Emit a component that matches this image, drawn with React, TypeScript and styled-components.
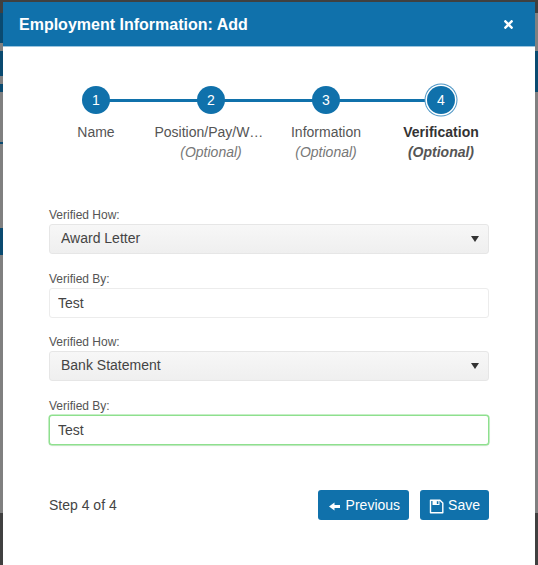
import React from 'react';
import styled, { createGlobalStyle } from 'styled-components';
import { FaTimes } from 'react-icons/fa';

const Global = createGlobalStyle`
  html, body {
    margin: 0;
    height: 100%;
    background: #808080;
    font-family: "Liberation Sans", Arial, sans-serif;
    overflow: hidden;
  }
`;

const BLUE = '#1071ab';

const Page = styled.div`
  position: relative;
  width: 538px;
  height: 565px;
  overflow: hidden;
  background: #808080;
`;

/* bits of the dimmed page showing around the dialog */
const Behind = styled.div<{ $top: number; $height: number; $color: string; $right?: boolean }>`
  position: absolute;
  top: ${p => p.$top}px;
  height: ${p => p.$height}px;
  width: 3px;
  background: ${p => p.$color};
  ${p => (p.$right ? 'right: 0;' : 'left: 0;')}
`;

const BottomShade = styled.div`
  position: absolute;
  left: 0;
  right: 0;
  top: 513px;
  bottom: 0;
  background: #404040;
`;

const TopShade = styled.div`
  position: absolute;
  left: 0;
  right: 0;
  top: 0;
  height: 13px;
  background: #404040;
`;

const Modal = styled.div`
  position: absolute;
  top: 2px;
  left: 3px;
  width: 532px;
  height: 563px;
  background: #fff;
  display: flex;
  flex-direction: column;
`;

const Header = styled.header`
  height: 45px;
  flex: none;
  box-sizing: border-box;
  background: ${BLUE};
  border-bottom: 1px solid #9cc5de;
  display: flex;
  align-items: center;
  justify-content: space-between;
  padding: 1px 20px 0 16px;
  color: #fff;
`;

const Title = styled.h4`
  margin: 0;
  font-size: 16px;
  font-weight: 700;
`;

const CloseIcon = styled(FaTimes)`
  width: 13px;
  height: 13px;
`;

const Stepper = styled.ol`
  position: relative;
  display: flex;
  list-style: none;
  margin: 39px 0 0 35.5px;
  padding: 0;
  width: 460px;

  &::before {
    content: '';
    position: absolute;
    top: 12.5px;
    left: 57px;
    width: 345px;
    height: 3px;
    background: ${BLUE};
  }
`;

const Step = styled.li`
  position: relative;
  width: 115px;
  display: flex;
  flex-direction: column;
  align-items: center;
  text-align: center;
`;

const Circle = styled.span<{ $active?: boolean }>`
  width: 28px;
  height: 28px;
  border-radius: 50%;
  background: ${BLUE};
  color: #fff;
  font-size: 14px;
  line-height: 28px;
  ${p => p.$active && `box-shadow: 0 0 0 1.5px #fff, 0 0 0 2.5px #4a94c4;`}
`;

const StepName = styled.span<{ $active?: boolean; $cut?: boolean }>`
  margin-top: 8px;
  max-width: 111px;
  font-size: 14px;
  line-height: 20px;
  color: ${p => (p.$active ? '#333' : '#555')};
  font-weight: ${p => (p.$active ? 700 : 400)};
  white-space: nowrap;
  overflow: hidden;
  text-overflow: ellipsis;
  ${p => p.$cut && 'margin-right: 2px;'}
`;

const StepNote = styled.em<{ $active?: boolean }>`
  font-size: 14px;
  line-height: 20px;
  color: ${p => (p.$active ? '#555' : '#777')};
  font-weight: ${p => (p.$active ? 700 : 400)};
`;

const Form = styled.form`
  margin: 47px 46px 0;
  display: flex;
  flex-direction: column;
  gap: 18.5px;
`;

const Field = styled.div`
  display: flex;
  flex-direction: column;
`;

const Label = styled.label`
  font-size: 12px;
  line-height: 12px;
  height: 15px;
  color: #555;
`;

const SelectWrap = styled.div`
  position: relative;
`;

const Select = styled.select`
  display: block;
  width: 100%;
  height: 30px;
  box-sizing: border-box;
  appearance: none;
  border: 1px solid #e6e6e6;
  border-radius: 3px;
  background: linear-gradient(#f7f7f7, #efefef);
  padding: 0 11px 2px;
  font: 14px "Liberation Sans", Arial, sans-serif;
  color: #444;
  outline: none;
`;

const Caret = styled.span`
  position: absolute;
  right: 10px;
  top: 12px;
  width: 0;
  height: 0;
  border-left: 4px solid transparent;
  border-right: 4px solid transparent;
  border-top: 6px solid #333;
  pointer-events: none;
`;

const Input = styled.input<{ $focus?: boolean }>`
  display: block;
  width: 100%;
  height: 30px;
  box-sizing: border-box;
  border: 1px solid ${p => (p.$focus ? '#8ee08e' : '#ececec')};
  border-radius: 3px;
  background: #fff;
  padding: 0 8px;
  font: 14px "Liberation Sans", Arial, sans-serif;
  color: #444;
  outline: none;
  ${p => p.$focus && 'box-shadow: 0 0 0 0.5px #8ee08e, 0 1px 2px rgba(0,0,0,.08);'}
`;

const Footer = styled.footer`
  margin: 45.5px 46px 0;
  display: flex;
  align-items: center;
  justify-content: space-between;
`;

const StepCount = styled.span`
  font-size: 14px;
  color: #444;
`;

const Buttons = styled.div`
  display: flex;
  gap: 11px;
`;

const Button = styled.button`
  height: 30px;
  box-sizing: border-box;
  display: flex;
  align-items: center;
  gap: 5px;
  border: 0;
  border-radius: 3px;
  background: ${BLUE};
  color: #fff;
  font: 14px "Liberation Sans", Arial, sans-serif;
  padding: 0 9px 1px;
`;

const ArrowIcon = () => (
  <svg width="14" height="14" viewBox="0 0 14 14" fill="#fff" style={{ marginTop: 3 }}>
    <path d="M2 7.5 L7.5 3.5 V6 H13 V9 H7.5 V11.5 Z" />
  </svg>
);

const SaveIcon = () => (
  <svg width="15" height="15" viewBox="0 0 15 15" style={{ margin: '4px -1px 0 0' }}>
    <path
      d="M1.5 1.2 H11 L13.8 4 V13.8 H1.5 Z"
      fill="none"
      stroke="#fff"
      strokeWidth="1.4"
      strokeLinejoin="round"
    />
    <path d="M3.5 1.2 H10.5 V6 H3.5 Z" fill="#fff" />
    <path d="M7.8 2.2 H9.4 V5 H7.8 Z" fill="#1071ab" />
  </svg>
);

const steps = [
  { name: 'Name' },
  { name: 'Position/Pay/Work Schedule', note: '(Optional)', cut: true },
  { name: 'Information', note: '(Optional)' },
  { name: 'Verification', note: '(Optional)', active: true },
];

const App = () => {
  return (
    <Page>
      <Global />
      <TopShade />
      <Behind $top={13} $height={30} $color="#0a4a70" />
      <Behind $top={51} $height={25} $color="#0a4a70" />
      <Behind $top={84} $height={8} $color="#0a4a70" />
      <Behind $top={142} $height={2} $color="#0a4a70" />
      <Behind $top={228} $height={27} $color="#0a4a70" />
      <Behind $top={51} $height={41} $color="#0a4a70" $right />
      <BottomShade />
      <Modal>
        <Header>
          <Title>Employment Information: Add</Title>
          <CloseIcon />
        </Header>
        <Stepper>
          {steps.map((s, i) => (
            <Step key={s.name}>
              <Circle $active={s.active}>{i + 1}</Circle>
              <StepName $active={s.active} $cut={s.cut}>{s.name}</StepName>
              {s.note && <StepNote $active={s.active}>{s.note}</StepNote>}
            </Step>
          ))}
        </Stepper>
        <Form>
          <Field>
            <Label>Verified How:</Label>
            <SelectWrap>
              <Select defaultValue="Award Letter">
                <option>Award Letter</option>
                <option>Bank Statement</option>
              </Select>
              <Caret />
            </SelectWrap>
          </Field>
          <Field>
            <Label>Verified By:</Label>
            <Input defaultValue="Test" />
          </Field>
          <Field>
            <Label>Verified How:</Label>
            <SelectWrap>
              <Select defaultValue="Bank Statement">
                <option>Award Letter</option>
                <option>Bank Statement</option>
              </Select>
              <Caret />
            </SelectWrap>
          </Field>
          <Field>
            <Label>Verified By:</Label>
            <Input $focus defaultValue="Test" />
          </Field>
        </Form>
        <Footer>
          <StepCount>Step 4 of 4</StepCount>
          <Buttons>
            <Button type="button">
              <ArrowIcon />
              Previous
            </Button>
            <Button type="button">
              <SaveIcon />
              Save
            </Button>
          </Buttons>
        </Footer>
      </Modal>
    </Page>
  );
};

export default App;
